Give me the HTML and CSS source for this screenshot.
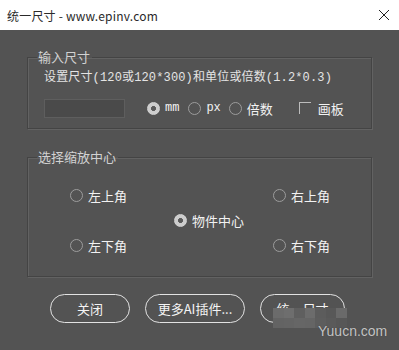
FILE: index.html
```html
<!DOCTYPE html>
<html lang="zh">
<head>
<meta charset="utf-8">
<title>统一尺寸</title>
<link rel="stylesheet" href="styles.css">
</head>
<body>
<div class="titlebar">
  <span class="title">统一尺寸 - www.epinv.com</span>
  <svg class="close" width="12" height="12" viewBox="0 0 12 12"><path d="M1 1L11 11M11 1L1 11" stroke="#222" stroke-width="1"/></svg>
</div>
<div class="content">
  <fieldset class="group">
    <legend>输入尺寸</legend>
    <div class="group-size">
      <div class="desc">设置尺寸(120或120*300)和单位或倍数(1.2*0.3)</div>
      <div class="row">
        <input class="size-input" type="text">
        <label class="opt opt-mm"><input type="radio" name="unit" checked><span class="mono">mm</span></label>
        <label class="opt opt-px"><input type="radio" name="unit"><span class="mono">px</span></label>
        <label class="opt opt-times"><input type="radio" name="unit"><span>倍数</span></label>
        <label class="opt opt-board"><input type="checkbox"><span>画板</span></label>
      </div>
    </div>
  </fieldset>
  <fieldset class="group group-second">
    <legend>选择缩放中心</legend>
    <div class="grid">
      <label class="opt tl"><input type="radio" name="c"><span>左上角</span></label>
      <label class="opt tr"><input type="radio" name="c"><span>右上角</span></label>
      <label class="opt mid"><input type="radio" name="c" checked><span>物件中心</span></label>
      <label class="opt bl"><input type="radio" name="c"><span>左下角</span></label>
      <label class="opt br"><input type="radio" name="c"><span>右下角</span></label>
    </div>
  </fieldset>
  <div class="buttons">
    <button class="btn btn-close">关闭</button>
    <button class="btn btn-more">更多AI插件...</button>
    <button class="btn btn-ok">统一尺寸</button>
  </div>
</div>
<div class="watermark">
  <div class="mosaic">
    <i class="m1"></i><i class="m2"></i><i class="m3"></i><i class="m4"></i><i class="m5"></i><i class="m6"></i><i class="m7"></i>
    <i class="m8"></i><i class="m9"></i><i class="m10"></i><i class="m11"></i><i class="m12"></i><i class="m13"></i><i class="m14"></i>
  </div>
  <span class="wm-text">Yuucn.com</span>
</div>
</body>
</html>
```
FILE: styles.css
```css
html, body {
  margin: 0;
  padding: 0;
}
body {
  width: 399px;
  height: 350px;
  background: #535353;
  font-family: "Noto Sans CJK SC", "Noto Sans", sans-serif;
  color: #ececec;
  position: relative;
  overflow: hidden;
}
.titlebar {
  height: 30px;
  background: #ffffff;
  display: flex;
  align-items: center;
  justify-content: space-between;
  padding: 0 9px 0 7px;
}
.title {
  font-size: 12px;
  color: #2a2a2a;
  letter-spacing: 0.2px;
}
.close {
  display: block;
}
.content {
  padding: 19px 27px 0 27px;
}
.group {
  margin: 0;
  padding: 0;
  border: 1px solid #444;
  box-shadow: 1px 1px 0 #626262, inset 1px 1px 0 #626262;
  min-width: 0;
}
.group legend {
  font-size: 13px;
  line-height: 16px;
  color: #d2d2d2;
  padding: 0 2px 0 1px;
  margin-left: 9px;
}
.group-size {
  padding: 5px 16px 10px 16px;
}
.desc {
  font-family: "Liberation Mono", "Noto Sans CJK SC", monospace;
  font-size: 12px;
  line-height: 16px;
  color: #e4e4e4;
  letter-spacing: 0.15px;
}
.row {
  display: flex;
  align-items: center;
  height: 20px;
  margin-top: 12px;
}
.size-input {
  box-sizing: border-box;
  width: 81px;
  height: 19px;
  margin: 0 22px 0 0;
  background: #4a4a4a;
  border: 1px solid #5e5e5e;
  outline: none;
  padding: 0;
}
.opt {
  display: inline-flex;
  align-items: center;
  gap: 5px;
  font-size: 13px;
  color: #f2f2f2;
  white-space: nowrap;
}
.opt input {
  appearance: none;
  -webkit-appearance: none;
  margin: 0;
  box-sizing: border-box;
  width: 13px;
  height: 13px;
  border: 1.5px solid #9c9c9c;
  border-radius: 50%;
  background: transparent;
  flex: none;
}
.opt input:checked {
  background: radial-gradient(circle, #5a5a5a 0 2.2px, #cdcdcd 2.8px);
  border-color: #d4d4d4;
}
.opt input[type="checkbox"] {
  border-radius: 0;
  width: 12px;
  height: 12px;
  border: none;
  border-top: 1px solid #bcbcbc;
  border-left: 1px solid #bcbcbc;
}
.mono {
  font-family: "Liberation Mono", monospace;
  font-size: 12px;
}
.opt-mm { margin-right: 9px; }
.opt-px { margin-right: 8px; }
.opt-times { margin-right: 26px; }
.opt-board { gap: 7px; }
.group-second {
  margin-top: 20px;
}
.grid {
  padding: 18px 0 18px 42px;
  display: grid;
  grid-template-columns: 104px 99px auto;
  grid-template-rows: 25px 25px 25px;
  align-items: center;
}
.tl { grid-column: 1; grid-row: 1; }
.tr { grid-column: 3; grid-row: 1; }
.mid { grid-column: 2; grid-row: 2; }
.bl { grid-column: 1; grid-row: 3; }
.br { grid-column: 3; grid-row: 3; }
.buttons {
  display: flex;
  gap: 15px;
  margin-top: 17px;
  padding-left: 23px;
}
.btn {
  box-sizing: border-box;
  height: 29px;
  border: 1.5px solid #e2e2e2;
  border-radius: 15px;
  background: transparent;
  color: #f4f4f4;
  font-family: "Noto Sans CJK SC", sans-serif;
  font-size: 13px;
  padding: 0;
}
.btn-close { width: 80px; }
.btn-more { width: 100px; }
.btn-ok { width: 85px; }
.watermark {
  position: absolute;
  left: 273px;
  top: 308px;
  width: 120px;
  height: 36px;
}
.mosaic {
  position: absolute;
  left: 0;
  top: 0;
  width: 74px;
  height: 20px;
  display: grid;
  grid-template-columns: repeat(7, 1fr);
  grid-template-rows: 1fr 1fr;
}
.mosaic i { display: block; background: #626262; }
.m1 { background: #6b6b6b !important; }
.m2 { background: #6e6e6e !important; }
.m3 { background: #5f5f5f !important; }
.m4 { background: #6c6c6c !important; }
.m5 { background: #5c5c5c !important; }
.m6 { background: #585858 !important; }
.m7 { background: #6a6a6a !important; }
.m8 { background: #636363 !important; }
.m9 { background: #646464 !important; }
.m10 { background: #666666 !important; }
.m11 { background: #656565 !important; }
.m12 { background: #5d5d5d !important; }
.m13 { background: #5a5a5a !important; }
.m14 { background: #575757 !important; }
.wm-text {
  position: absolute;
  left: 45px;
  top: 15px;
  font-family: "Liberation Sans", sans-serif;
  font-size: 14px;
  color: #c4c4c4;
  text-shadow: 0 0 1px #3a3a3a;
}
```
